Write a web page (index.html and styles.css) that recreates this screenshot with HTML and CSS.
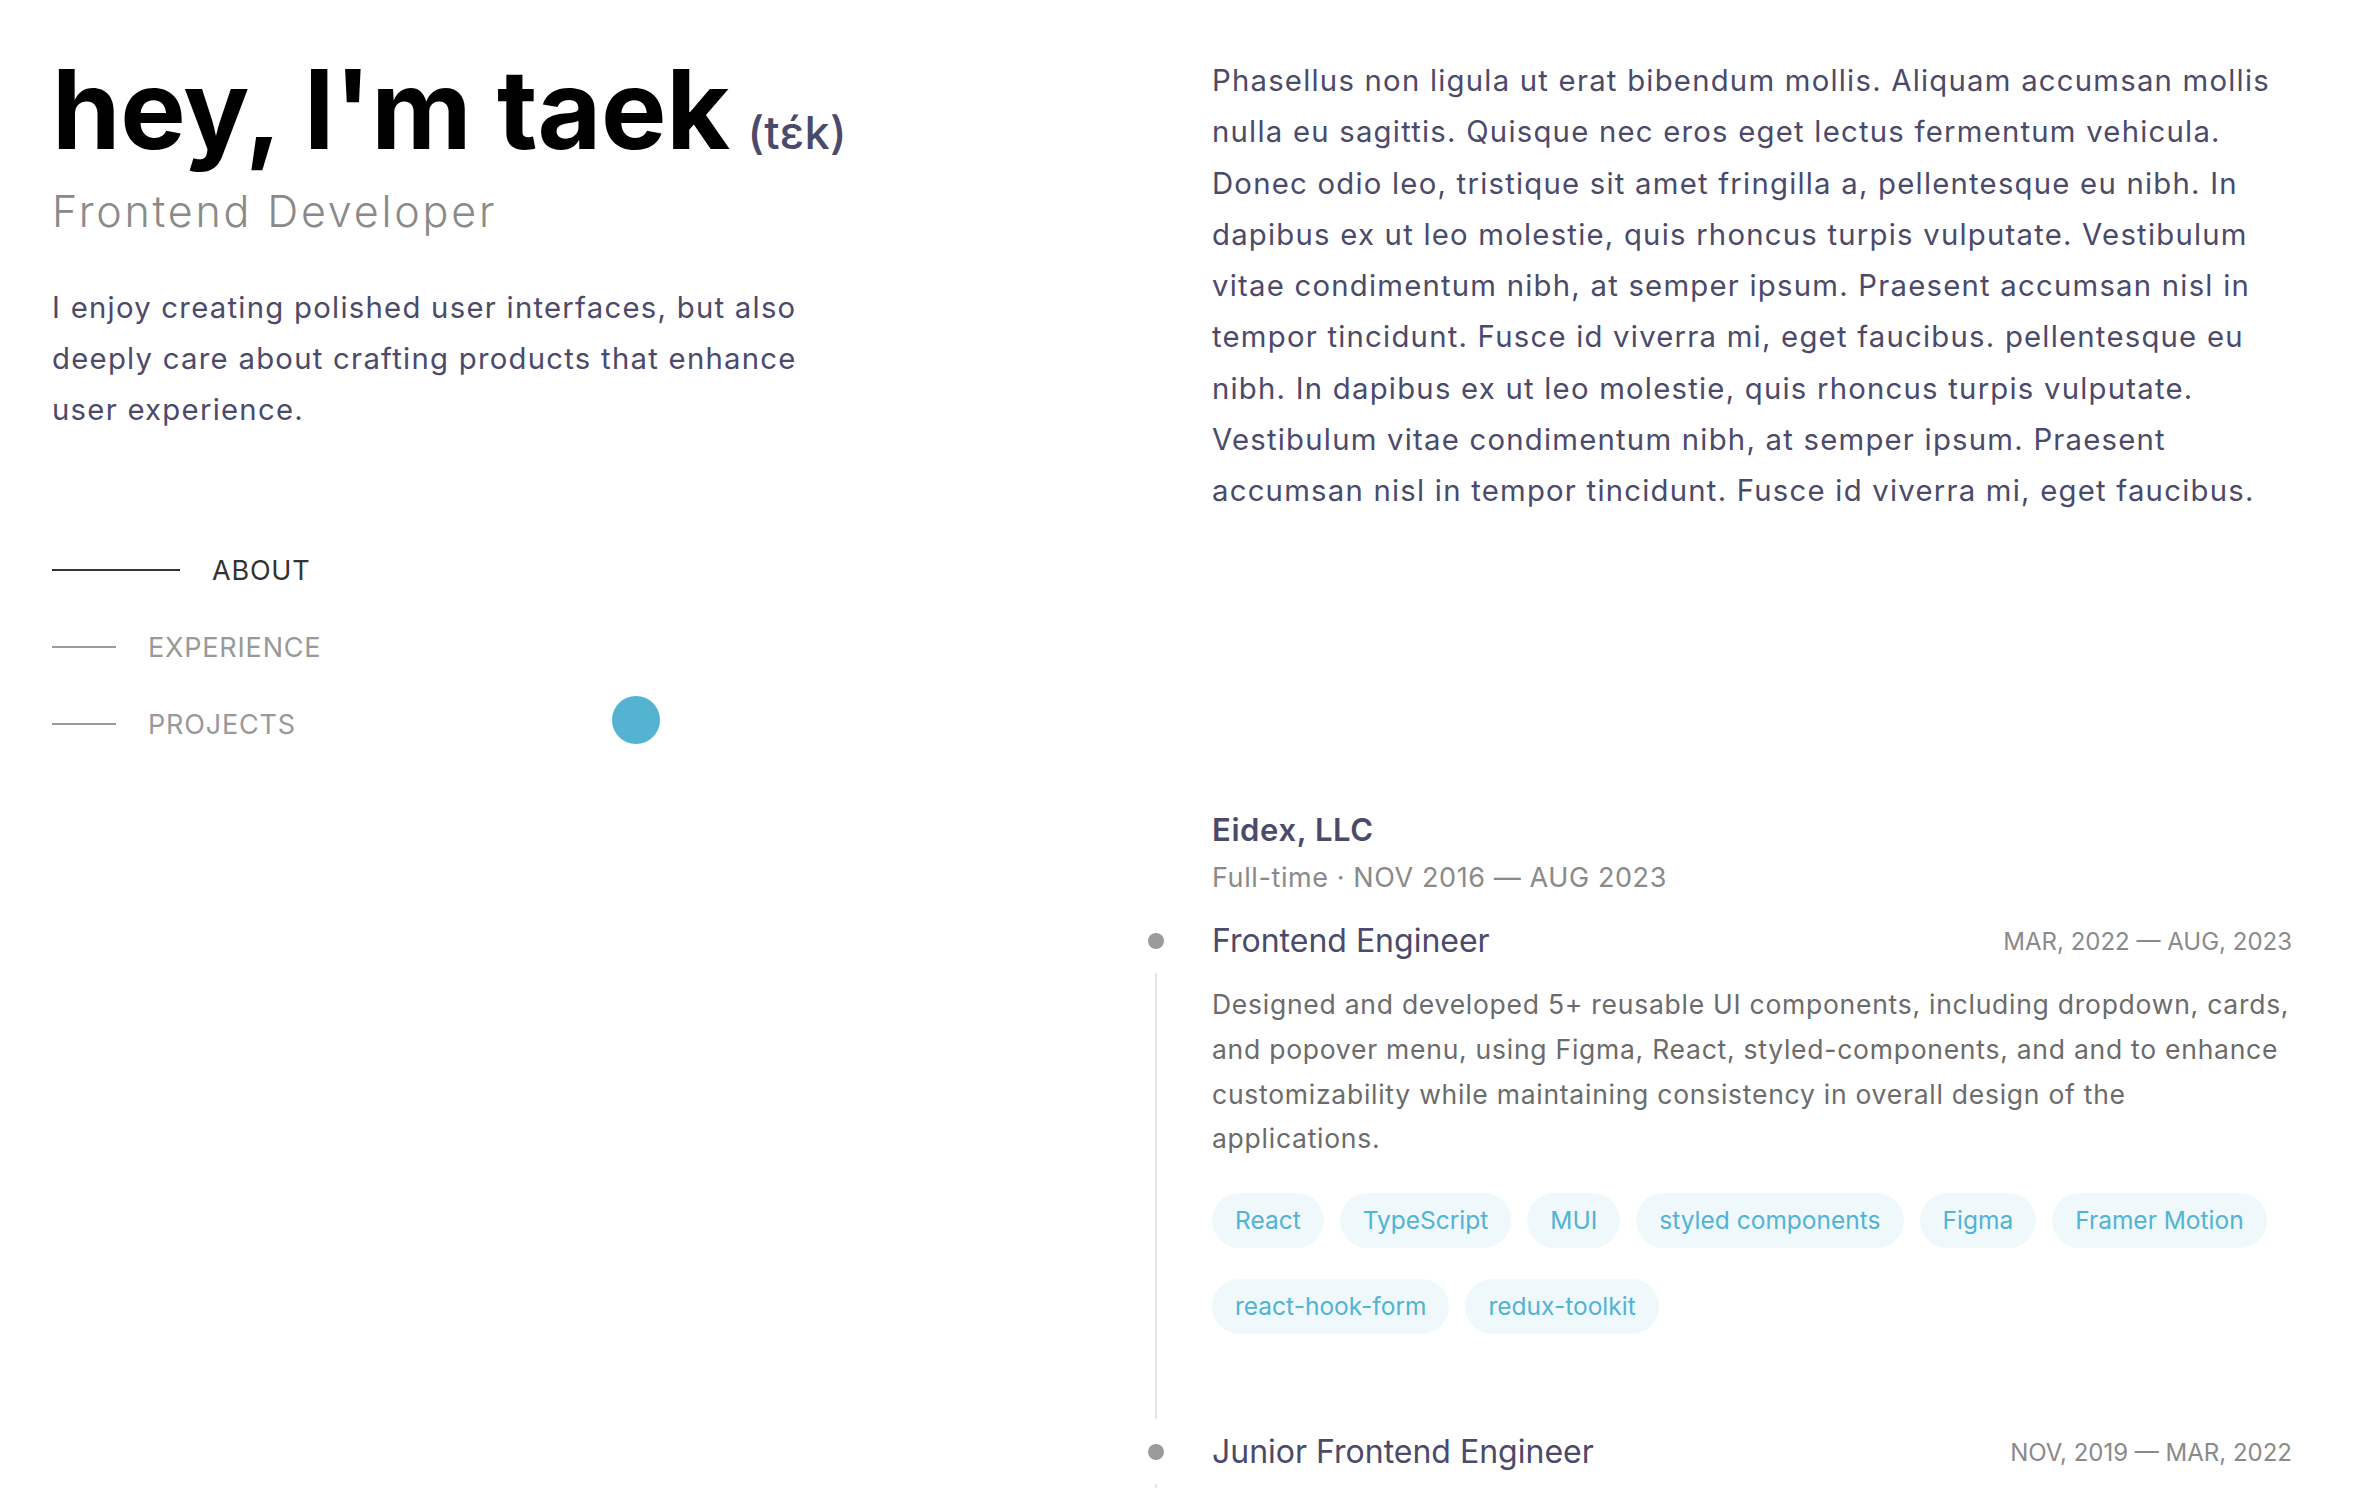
FILE: index.html
```html
<!DOCTYPE html>
<html lang="en">
<head>
<meta charset="utf-8">
<title>taek — Frontend Developer</title>
<link rel="stylesheet" href="styles.css">
</head>
<body>
<div class="page">
  <header class="intro">
    <h1 class="title">hey, I'm taek <span class="pron">(tɛ́k)</span></h1>
    <p class="role">Frontend Developer</p>
    <p class="lead">I enjoy creating polished user interfaces, but also deeply care about crafting products that enhance user experience.</p>
    <nav class="nav">
      <a class="nav-item active" href="#about"><span class="nav-line"></span><span class="nav-text">ABOUT</span></a>
      <a class="nav-item" href="#experience"><span class="nav-line"></span><span class="nav-text">EXPERIENCE</span></a>
      <a class="nav-item" href="#projects"><span class="nav-line"></span><span class="nav-text">PROJECTS</span></a>
    </nav>
  </header>

  <main class="content">
    <section class="about" id="about">
      <p>Phasellus non ligula ut erat bibendum mollis. Aliquam accumsan mollis nulla eu sagittis. Quisque nec eros eget lectus fermentum vehicula. Donec odio leo, tristique sit amet fringilla a, pellentesque eu nibh. In dapibus ex ut leo molestie, quis rhoncus turpis vulputate. Vestibulum vitae condimentum nibh, at semper ipsum. Praesent accumsan nisl in tempor tincidunt. Fusce id viverra mi, eget faucibus. pellentesque eu nibh. In dapibus ex ut leo molestie, quis rhoncus turpis vulputate. Vestibulum vitae condimentum nibh, at semper ipsum. Praesent accumsan nisl in tempor tincidunt. Fusce id viverra mi, eget faucibus.</p>
    </section>

    <section class="experience" id="experience">
      <h2 class="company">Eidex, LLC</h2>
      <p class="company-meta">Full-time · NOV 2016 — AUG 2023</p>

      <div class="job">
        <span class="job-dot"></span>
        <div class="job-head">
          <h3 class="job-title">Frontend Engineer</h3>
          <span class="job-date">MAR, 2022 — AUG, 2023</span>
        </div>
        <span class="job-line"></span>
        <div class="job-body">
          <p class="job-desc">Designed and developed 5+ reusable UI components, including dropdown, cards, and popover menu, using Figma, React, styled-components, and and to enhance customizability while maintaining consistency in overall design of the applications.</p>
          <ul class="tags">
            <li class="tag">React</li>
            <li class="tag">TypeScript</li>
            <li class="tag">MUI</li>
            <li class="tag">styled components</li>
            <li class="tag">Figma</li>
            <li class="tag">Framer Motion</li>
            <li class="tag">react-hook-form</li>
            <li class="tag">redux-toolkit</li>
          </ul>
        </div>
      </div>

      <div class="job">
        <span class="job-dot"></span>
        <div class="job-head">
          <h3 class="job-title">Junior Frontend Engineer</h3>
          <span class="job-date">NOV, 2019 — MAR, 2022</span>
        </div>
        <span class="job-line"></span>
        <div class="job-body job-body-empty"></div>
      </div>
    </section>
  </main>
</div>
<div class="cursor"></div>
</body>
</html>
```

FILE: styles.css
```css
* {
  box-sizing: border-box;
}

html, body {
  margin: 0;
  padding: 0;
  background: #ffffff;
}

body {
  font-family: "Inter", "Noto Sans", "Liberation Sans", sans-serif;
  color: #4b4a6a;
  overflow: hidden;
  height: 1488px;
}

.page {
  display: grid;
  grid-template-columns: 1fr 1080px;
  padding: 55px 88px 0 52px;
}

/* ---------- left intro ---------- */
.intro {
  display: flex;
  flex-direction: column;
}

.title {
  margin: -1px 0 0;
  font-size: 110px;
  line-height: 1;
  font-weight: 700;
  color: #000000;
  letter-spacing: -0.003em;
  white-space: nowrap;
}

.pron {
  font-size: 45px;
  font-weight: 500;
  color: #4b4a6a;
  letter-spacing: 0.005em;
  margin-left: -8px;
}

.role {
  margin: 22px 0 0;
  font-size: 43px;
  line-height: 1.2;
  font-weight: 300;
  letter-spacing: 0.065em;
  color: #8a8a8a;
}

.lead {
  margin: 44px 0 0;
  max-width: 790px;
  font-size: 29.3px;
  line-height: 1.75;
  letter-spacing: 0.043em;
  color: #4b4a6a;
}

.nav {
  display: flex;
  flex-direction: column;
  gap: 41px;
  margin-top: 117px;
}

.nav-item {
  display: flex;
  align-items: center;
  gap: 32px;
  height: 36px;
  text-decoration: none;
  color: #999999;
}

.nav-line {
  width: 64px;
  height: 2px;
  background: #9a9a9a;
}

.nav-text {
  font-size: 27px;
  letter-spacing: 0.03em;
}

.nav-item.active {
  color: #333333;
}

.nav-item.active .nav-line {
  width: 128px;
  background: #333333;
}

/* ---------- right content ---------- */
.about p {
  margin: 0;
  font-size: 29.3px;
  line-height: 1.75;
  letter-spacing: 0.042em;
  color: #4b4a6a;
}

.experience {
  margin-top: 291px;
}

.company {
  margin: 0;
  font-size: 31px;
  line-height: 1.5;
  font-weight: 600;
  letter-spacing: 0.02em;
  color: #4b4a6a;
}

.company-meta {
  margin: 4px 0 0;
  font-size: 27px;
  line-height: 1.5;
  letter-spacing: 0.022em;
  color: #8a8a8a;
}

.job {
  display: grid;
  grid-template-columns: 64px 1fr;
  margin-left: -64px;
}

.company-meta + .job {
  margin-top: 19px;
}

.job-dot {
  align-self: center;
  width: 16px;
  height: 16px;
  border-radius: 50%;
  background: #9b9b9b;
}

.job-head {
  display: flex;
  align-items: center;
  justify-content: space-between;
  height: 48px;
}

.job-title {
  margin: 0;
  font-size: 32px;
  line-height: 1.5;
  font-weight: 400;
  color: #4b4a6a;
}

.job-date {
  font-size: 24px;
  color: #8a8a8a;
}

.job-line {
  width: 2px;
  margin: 8px 0 9px 7px;
  background: #e6e6e6;
}

.job-body {
  padding: 17px 0 94px;
}

.job-body-empty {
  min-height: 200px;
}

.job-desc {
  margin: 0;
  font-size: 26.5px;
  line-height: 44.67px;
  letter-spacing: 0.028em;
  color: #6b6b6b;
}

.tags {
  display: flex;
  flex-wrap: wrap;
  gap: 31px 16px;
  list-style: none;
  margin: 32px 0 0;
  padding: 0;
}

.tag {
  padding: 9px 23px;
  border-radius: 999px;
  background: #eff8fb;
  color: #52b3d4;
  font-size: 24.5px;
  line-height: 37px;
}

/* custom cursor overlay */
.cursor {
  position: absolute;
  left: 612px;
  top: 696px;
  width: 48px;
  height: 48px;
  border-radius: 50%;
  background: #53b3d1;
}
```
